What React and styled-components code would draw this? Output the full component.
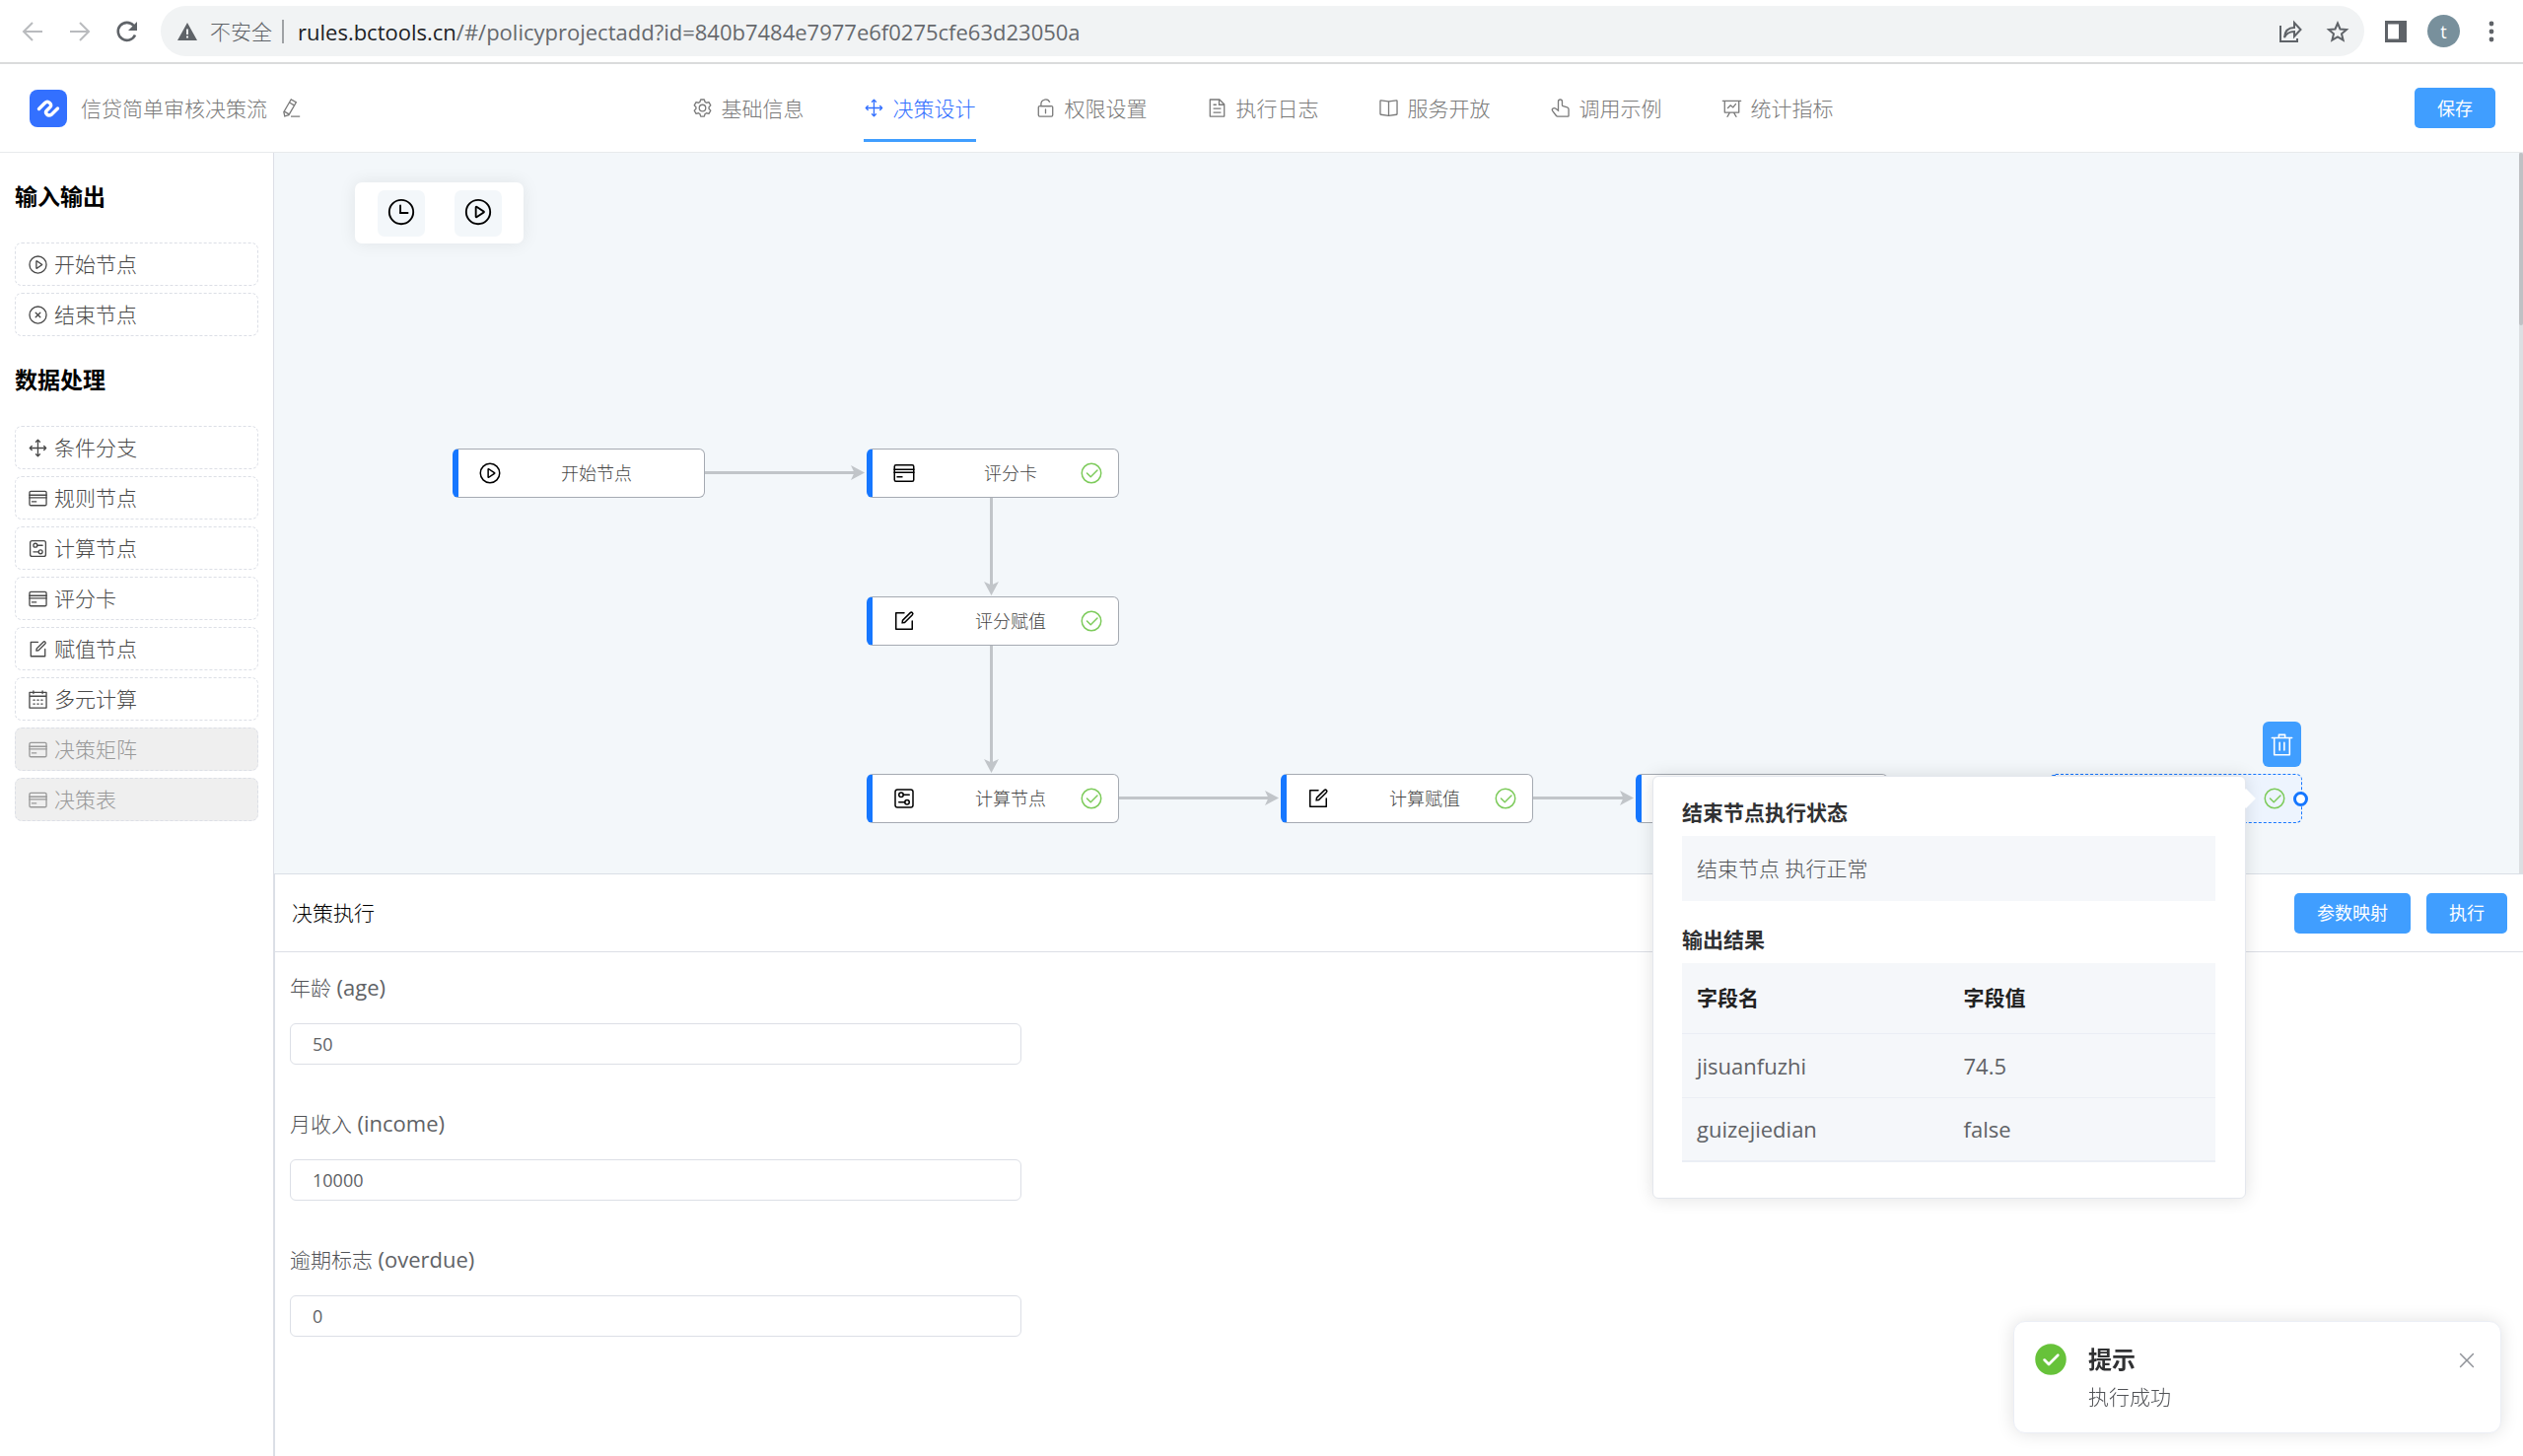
import React from "react";
import styled, { createGlobalStyle } from "styled-components";

const GlobalStyle = createGlobalStyle`
  *, *::before, *::after { box-sizing: border-box; }
  body {
    margin: 0;
    background: #fff;
    color: #505256;
    font-family: "Open Sans", "Noto Sans CJK SC", sans-serif;
    font-size: 21px;
    line-height: 32px;
    font-weight: 300;
  }
  button, input { font: inherit; color: inherit; }
  button { cursor: pointer; }
  h1, h2, h3, p, ul { margin: 0; padding: 0; }
`;

/* ---------- icons ---------- */

const RING =
  "M512 896a384 384 0 1 0 0-768 384 384 0 0 0 0 768zm0 64a448 448 0 1 1 0-896 448 448 0 0 1 0 896z";

const ICONS = {
  play: [
    RING,
    "M464 648.384 668.608 512 464 375.616v272.768zm10.624-342.656 249.472 166.336a48 48 0 0 1 0 79.872L474.624 718.272A48 48 0 0 1 400 678.336V345.6a48 48 0 0 1 74.624-39.936z",
  ],
  close: [
    RING,
    "m466.752 512-90.496-90.496a32 32 0 0 1 45.248-45.248L512 466.752l90.496-90.496a32 32 0 0 1 45.248 45.248L557.248 512l90.496 90.496a32 32 0 1 1-45.248 45.248L512 557.248l-90.496 90.496a32 32 0 0 1-45.248-45.248L466.752 512z",
  ],
  clock: [
    RING,
    "M480 256a32 32 0 0 1 32 32v256a32 32 0 0 1-64 0V288a32 32 0 0 1 32-32z",
    "M480 512h256q32 0 32 32t-32 32H480q-32 0-32-32t32-32z",
  ],
  check: [
    RING,
    "M745.344 361.344a32 32 0 0 1 45.312 45.312l-288 288a32 32 0 0 1-45.312 0l-160-160a32 32 0 1 1 45.312-45.312L480 626.752l265.344-265.408z",
  ],
  rank: [
    "m186.496 544 41.408 41.344a32 32 0 1 1-45.248 45.312l-96-96a32 32 0 0 1 0-45.312l96-96a32 32 0 1 1 45.248 45.312L186.496 480h290.816V186.432l-41.472 41.472a32 32 0 1 1-45.248-45.184l96-96.128a32 32 0 0 1 45.312 0l96 96.064a32 32 0 0 1-45.248 45.184l-41.344-41.28V480H832l-41.344-41.344a32 32 0 0 1 45.248-45.312l96 96a32 32 0 0 1 0 45.312l-96 96a32 32 0 0 1-45.248-45.312L832 544H541.312v293.44l41.344-41.28a32 32 0 1 1 45.248 45.248l-96 96a32 32 0 0 1-45.312 0l-96-96a32 32 0 1 1 45.312-45.248l41.408 41.408V544H186.496z",
  ],
  trash: [
    "M160 256H96a32 32 0 0 1 0-64h256V95.936a32 32 0 0 1 32-32h256a32 32 0 0 1 32 32V192h256a32 32 0 1 1 0 64h-64v672a32 32 0 0 1-32 32H192a32 32 0 0 1-32-32V256zm448-64v-64H416v64h192zM224 896h576V256H224v640zm192-128a32 32 0 0 1-32-32V416a32 32 0 0 1 64 0v320a32 32 0 0 1-32 32zm192 0a32 32 0 0 1-32-32V416a32 32 0 0 1 64 0v320a32 32 0 0 1-32 32z",
  ],
  edit: [
    "M832 512a32 32 0 1 1 64 0v352a32 32 0 0 1-32 32H160a32 32 0 0 1-32-32V160a32 32 0 0 1 32-32h352a32 32 0 0 1 0 64H192v640h640V512z",
    "m469.952 554.24 52.8-7.552L847.104 222.4a32 32 0 1 0-45.248-45.248L477.44 501.44l-7.552 52.8zm422.4-422.4a96 96 0 0 1 0 135.808l-331.84 331.84a32 32 0 0 1-18.112 9.088L436.8 623.68a32 32 0 0 1-36.224-36.224l15.104-105.6a32 32 0 0 1 9.024-18.112l331.904-331.84a96 96 0 0 1 135.744 0z",
  ],
  pen: [
    "m199.04 672.64 193.984 112 224-387.968-193.92-112-224 388.032zm-23.872 60.16 32.896 148.288 144.896-45.696L175.168 732.8zM455.04 229.248l193.92 112 56.704-98.112-193.984-112-56.64 98.112zM104.32 708.8l384-665.024 304.768 175.936L409.152 884.8h.064l-248.448 78.336L104.32 708.8zm384 254.272v-64h448v64h-448z",
  ],
  cross: [
    "M764.288 214.592 512 466.88 259.712 214.592a31.936 31.936 0 0 0-45.12 45.12L466.752 512 214.528 764.224a31.936 31.936 0 1 0 45.12 45.184L512 557.184l252.288 252.288a31.936 31.936 0 0 0 45.12-45.12L557.12 512.064l252.288-252.352a31.936 31.936 0 1 0-45.12-45.184z",
  ],
  success: [
    "M512 64a448 448 0 1 1 0 896 448 448 0 0 1 0-896zm-55.808 536.384-99.52-99.584a38.4 38.4 0 1 0-54.336 54.336l126.72 126.72a38.272 38.272 0 0 0 54.336 0l262.4-262.464a38.4 38.4 0 1 0-54.272-54.336L456.192 600.384z",
  ],
  unlock: [
    "M224 448a32 32 0 0 0-32 32v384a32 32 0 0 0 32 32h576a32 32 0 0 0 32-32V480a32 32 0 0 0-32-32H224zm0-64h576a96 96 0 0 1 96 96v384a96 96 0 0 1-96 96H224a96 96 0 0 1-96-96V480a96 96 0 0 1 96-96z",
    "M512 544a32 32 0 0 1 32 32v192a32 32 0 1 1-64 0V576a32 32 0 0 1 32-32zm178.304-295.296A192.064 192.064 0 0 0 320 320v64h352l96 38.4V448H256V320a256 256 0 0 1 493.76-95.104l-59.456 23.808z",
  ],
  document: [
    "M832 384H576V128H192v768h640V384zm-26.496-64L640 154.496V320h165.504zM160 64h480l256 256v608a32 32 0 0 1-32 32H160a32 32 0 0 1-32-32V96a32 32 0 0 1 32-32zm160 448h384v64H320v-64zm0-192h160v64H320v-64zm0 384h384v64H320v-64z",
  ],
  reading: [
    "m512 863.36 384-54.848v-638.72L525.568 222.72a96 96 0 0 1-27.136 0L128 169.792v638.72l384 54.848zM137.024 106.432l370.432 52.928a32 32 0 0 0 9.088 0l370.432-52.928A64 64 0 0 1 960 169.792v638.72a64 64 0 0 1-54.976 63.36l-388.48 55.488a32 32 0 0 1-9.088 0l-388.48-55.488A64 64 0 0 1 64 808.512v-638.72a64 64 0 0 1 73.024-63.36z",
    "M480 192h64v704h-64z",
  ],
  pointer: [
    "M511.552 128c-35.584 0-64.384 28.8-64.384 64.448v516.48L274.048 570.88a94.272 94.272 0 0 0-112.896-3.456 44.416 44.416 0 0 0-8.96 62.208L332.8 870.4A64 64 0 0 0 384 896h512V575.232a64 64 0 0 0-45.632-61.312l-205.952-61.76A96 96 0 0 1 576 360.192V192.448C576 156.8 547.2 128 511.552 128zM359.04 556.8l24.128 19.2V192.448a128.448 128.448 0 1 1 256.832 0v167.744a32 32 0 0 0 22.784 30.656l206.016 61.76A128 128 0 0 1 960 575.232V896a64 64 0 0 1-64 64H384a128 128 0 0 1-102.4-51.2L101.056 668.032A108.416 108.416 0 0 1 128 512.512a158.272 158.272 0 0 1 185.984 8.32z",
  ],
  dataLine: [
    "M359.168 768H160a32 32 0 0 1-32-32V192H64a32 32 0 0 1 0-64h896a32 32 0 1 1 0 64h-64v544a32 32 0 0 1-32 32H665.216l110.848 192h-73.856L591.36 768H433.024L322.176 960H248.32l110.848-192zM832 192H192v512h640V192z",
    "M342.656 534.656a32 32 0 1 1-45.312-45.312L444.992 341.76l125.44 94.08L679.04 300.032a32 32 0 1 1 49.92 39.936L581.632 524.224 451.008 426.24 342.656 534.592z",
  ],
  setting: [
    "M600.704 64a32 32 0 0 1 30.464 22.208l35.2 109.376c14.784 7.232 28.928 15.36 42.432 24.512l112.384-24.192a32 32 0 0 1 34.432 15.36L944.32 364.8a32 32 0 0 1-4.032 37.504l-77.12 85.12a357.12 357.12 0 0 1 0 49.024l77.12 85.248a32 32 0 0 1 4.032 37.504l-88.704 153.6a32 32 0 0 1-34.432 15.296L708.8 803.904c-13.44 9.088-27.648 17.28-42.368 24.512l-35.264 109.376A32 32 0 0 1 600.704 960H423.296a32 32 0 0 1-30.464-22.208L357.696 828.48a351.616 351.616 0 0 1-42.56-24.64l-112.32 24.256a32 32 0 0 1-34.432-15.36L79.68 659.2a32 32 0 0 1 4.032-37.504l77.12-85.248a357.12 357.12 0 0 1 0-48.896l-77.12-85.248A32 32 0 0 1 79.68 364.8l88.704-153.6a32 32 0 0 1 34.432-15.296l112.32 24.256c13.568-9.152 27.776-17.408 42.56-24.64l35.2-109.312A32 32 0 0 1 423.232 64H600.64zm-23.424 64H446.72l-36.352 113.088-24.512 11.968a294.113 294.113 0 0 0-34.816 20.096l-22.656 15.36-116.224-25.088-65.28 113.152 79.68 88.192-1.92 27.136a293.12 293.12 0 0 0 0 40.192l1.92 27.136-79.808 88.192 65.344 113.152 116.224-25.024 22.656 15.296a294.113 294.113 0 0 0 34.816 20.096l24.512 11.968L446.72 896h130.688l36.48-113.152 24.448-11.904a288.282 288.282 0 0 0 34.752-20.096l22.592-15.296 116.288 25.024 65.28-113.152-79.744-88.192 1.92-27.136a293.12 293.12 0 0 0 0-40.256l-1.92-27.136 79.808-88.128-65.344-113.152-116.288 24.96-22.592-15.232a287.616 287.616 0 0 0-34.752-20.096l-24.448-11.904L577.344 128zM512 320a192 192 0 1 1 0 384 192 192 0 0 1 0-384zm0 64a128 128 0 1 0 0 256 128 128 0 0 0 0-256z",
  ],
  card: [
    "M160 192a32 32 0 0 0-32 32v576a32 32 0 0 0 32 32h704a32 32 0 0 0 32-32V224a32 32 0 0 0-32-32H160zm0-64h704a96 96 0 0 1 96 96v576a96 96 0 0 1-96 96H160a96 96 0 0 1-96-96V224a96 96 0 0 1 96-96z",
    "M64 320h896v64H64v-64zm0 128h896v64H64v-64zm128 192h256v64H192z",
  ],
  setup: [
    "M224 160a64 64 0 0 0-64 64v576a64 64 0 0 0 64 64h576a64 64 0 0 0 64-64V224a64 64 0 0 0-64-64H224zm0-64h576a128 128 0 0 1 128 128v576a128 128 0 0 1-128 128H224A128 128 0 0 1 96 800V224A128 128 0 0 1 224 96z",
    "M384 416a64 64 0 1 0 0-128 64 64 0 0 0 0 128zm0 64a128 128 0 1 1 0-256 128 128 0 0 1 0 256z",
    "M480 320h256q32 0 32 32t-32 32H480q-32 0-32-32t32-32zm160 416a64 64 0 1 0 0-128 64 64 0 0 0 0 128zm0 64a128 128 0 1 1 0-256 128 128 0 0 1 0 256z",
    "M288 640h256q32 0 32 32t-32 32H288q-32 0-32-32t32-32z",
  ],
  calendar: [
    "M128 384v512h768V192H768v32a32 32 0 1 1-64 0v-32H320v32a32 32 0 0 1-64 0v-32H128v128h768v64H128zm192-256h384V96a32 32 0 1 1 64 0v32h160a32 32 0 0 1 32 32v768a32 32 0 0 1-32 32H96a32 32 0 0 1-32-32V160a32 32 0 0 1 32-32h160V96a32 32 0 0 1 64 0v32zm-32 384h64a32 32 0 0 1 0 64h-64a32 32 0 0 1 0-64zm0 192h64a32 32 0 1 1 0 64h-64a32 32 0 1 1 0-64zm192-192h64a32 32 0 0 1 0 64h-64a32 32 0 0 1 0-64zm0 192h64a32 32 0 1 1 0 64h-64a32 32 0 1 1 0-64zm192-192h64a32 32 0 1 1 0 64h-64a32 32 0 1 1 0-64zm0 192h64a32 32 0 1 1 0 64h-64a32 32 0 1 1 0-64z",
  ],
};

const IconSvg = styled.svg`
  display: block;
  flex: none;
  width: ${(p) => p.$size}px;
  height: ${(p) => p.$size}px;
  fill: currentColor;
`;

const Icon = ({ name, size = 21 }) => (
  <IconSvg viewBox="0 0 1024 1024" $size={size} aria-hidden="true">
    {ICONS[name].map((d) => (
      <path key={d} d={d} />
    ))}
  </IconSvg>
);

const LineSvg = styled.svg`
  display: block;
  flex: none;
  width: 24px;
  height: 24px;
  fill: none;
  stroke: currentColor;
  stroke-width: 2;
`;

/* ---------- shell ---------- */

const Page = styled.div`
  display: flex;
  flex-direction: column;
  height: 100vh;
  overflow: hidden;
`;

const BrowserBar = styled.div`
  flex: none;
  display: flex;
  align-items: center;
  gap: 20px;
  height: 65px;
  padding: 0 20px 0 21px;
  border-bottom: 2px solid #dadbdc;
  color: #5f6368;
`;

const HistoryButtons = styled.div`
  display: flex;
  gap: 24px;
  margin-right: 2px;
`;

const BarButton = styled.button`
  display: block;
  padding: 0;
  border: 0;
  background: none;
  color: ${(p) => (p.disabled ? "#b9bbbe" : "#5f6368")};
`;

const Omnibox = styled.div`
  flex: 1;
  display: flex;
  align-items: center;
  height: 51px;
  padding: 0 15px;
  border-radius: 26px;
  background: #f1f3f4;
`;

const Insecure = styled.span`
  display: flex;
  align-items: center;
  gap: 11px;
  padding-right: 10px;
`;

const Divider = styled.span`
  width: 2px;
  height: 24px;
  margin-right: 14px;
  background: #9fa2a5;
`;

const Address = styled.span`
  flex: 1;
  font-size: 22px;
  font-weight: 400;
  color: #66696d;

  b {
    font-weight: 400;
    color: #202124;
  }
`;

const OmniActions = styled.span`
  display: flex;
  gap: 24px;
`;

const Avatar = styled.button`
  width: 33px;
  height: 33px;
  padding: 0;
  border: 0;
  border-radius: 50%;
  background: #78909c;
  color: #fff;
  font-size: 18px;
  font-weight: 400;
  line-height: 32px;
`;

const AppHeader = styled.header`
  flex: none;
  display: grid;
  grid-template-columns: 1fr auto 1fr;
  align-items: center;
  height: 90px;
  padding: 0 28px 0 30px;
  border-bottom: 1px solid #e8eaec;
`;

const Brand = styled.div`
  display: flex;
  align-items: center;
  gap: 14px;
  color: #7a7a7a;
`;

const BrandName = styled.h1`
  font-size: 21px;
  font-weight: 300;
`;

const Logo = styled.svg`
  display: block;
  width: 38px;
  height: 38px;
`;

const Tabs = styled.nav`
  display: flex;
  gap: 60px;
  align-self: stretch;
`;

const Tab = styled.a`
  display: flex;
  align-items: center;
  gap: 9px;
  height: 79px;
  padding-top: 13px;
  border-bottom: 3px solid ${(p) => (p.$active ? "#409eff" : "transparent")};
  color: ${(p) => (p.$active ? "#3370ff" : "#7a7a7a")};
  text-decoration: none;
`;

const PrimaryButton = styled.button`
  height: 41px;
  padding: 0 23px;
  border: 0;
  border-radius: 5px;
  background: #409eff;
  color: #fff;
  font-size: 18px;
  font-weight: 400;
  justify-self: end;
`;

const Body = styled.div`
  flex: 1;
  min-height: 0;
  display: flex;
`;

/* ---------- sidebar ---------- */

const Sidebar = styled.aside`
  flex: none;
  width: 278px;
  padding: 28px 15px;
  border-right: 1px solid #dcdfe6;
`;

const GroupTitle = styled.h2`
  margin-bottom: 31px;
  font-size: 23px;
  line-height: 32px;
  font-weight: 700;
  color: #000;
`;

const Palette = styled.div`
  display: flex;
  flex-direction: column;
  gap: 7px;
  margin-bottom: 28px;
`;

const PaletteItem = styled.button`
  display: flex;
  align-items: center;
  gap: 6px;
  height: 44px;
  padding: 0 12px;
  border: 1px dashed #dcdfe6;
  border-radius: 7px;
  background: ${(p) => (p.disabled ? "#efefef" : "#fff")};
  color: ${(p) => (p.disabled ? "#999" : "#484848")};
  text-align: left;
`;

/* ---------- canvas ---------- */

const Main = styled.main`
  flex: 1;
  min-width: 0;
  display: flex;
  flex-direction: column;
`;

const Canvas = styled.section`
  position: relative;
  z-index: 1;
  flex: 1;
  background: #f3f7fa;
`;

const ScrollTrack = styled.div`
  position: absolute;
  top: 0;
  right: 0;
  bottom: 0;
  width: 4px;
  background: #dcdfe2;
`;

const ScrollThumb = styled.div`
  height: 175px;
  border-radius: 2px;
  background: #bfc1c4;
`;

const Toolbar = styled.div`
  position: absolute;
  left: 82px;
  top: 30px;
  display: flex;
  gap: 30px;
  padding: 8px 22px 7px 23px;
  border-radius: 7px;
  background: #fff;
  box-shadow: 0 0 18px rgba(0, 0, 0, 0.08);
`;

const ToolButton = styled.button`
  width: 48px;
  height: 47px;
  padding: 0 9px 3px;
  border: 0;
  border-radius: 7px;
  background: #f3f7fa;
  color: #000;
`;

const Edges = styled.svg`
  position: absolute;
  inset: 0;
  width: 100%;
  height: 100%;
  fill: #c1c5c9;
  stroke: none;
`;

const NodeBox = styled.div`
  position: absolute;
  left: ${(p) => p.$x}px;
  top: ${(p) => p.$y}px;
  display: flex;
  align-items: center;
  width: 256px;
  height: 50px;
  padding: 0 13px 0 20px;
  border: 1px ${(p) => (p.$selected ? "dashed #1677ff" : "solid #a5aab2")};
  border-left: 6px solid #1677ff;
  border-radius: 6px;
  background: ${(p) => (p.$selected ? "#edf4fe" : "#fff")};
  font-size: 18px;
  color: #444;
`;

const NodeIcon = styled.span`
  color: #000;
`;

const NodeLabel = styled.span`
  flex: 1;
  text-align: center;
`;

const NodeStatus = styled.span`
  position: absolute;
  right: 15px;
  top: 12px;
  color: #7dcb5b;
`;

const Anchor = styled.span`
  position: absolute;
  left: 2048px;
  top: 648px;
  width: 15px;
  height: 15px;
  border: 3px solid #1677ff;
  border-radius: 50%;
  background: #fff;
`;

const DeleteButton = styled.button`
  position: absolute;
  left: 2017px;
  top: 577px;
  width: 39px;
  height: 46px;
  padding: 0 7px;
  border: 0;
  border-radius: 6px;
  background: #409eff;
  color: #fff;
`;

/* ---------- result popover ---------- */

const Popover = styled.div`
  position: absolute;
  left: 1398px;
  top: 632px;
  width: 602px;
  padding: 20px 30px 36px 29px;
  border: 1px solid #e4e7ed;
  border-radius: 6px;
  background: #fff;
  box-shadow: 0 0 18px rgba(0, 0, 0, 0.12);

  &::after {
    content: "";
    position: absolute;
    right: -8px;
    top: 15px;
    width: 14px;
    height: 14px;
    background: #fff;
    transform: rotate(45deg);
  }
`;

const PopTitle = styled.h3`
  font-size: 21px;
  line-height: 32px;
  font-weight: 700;
  color: #303133;
`;

const StatusLine = styled.p`
  margin: 8px 0 23px;
  padding: 17px 15px;
  background: #f5f7fa;
`;

const ResultTable = styled.table`
  width: 100%;
  margin-top: 8px;
  border-collapse: collapse;
  table-layout: fixed;
  background: #f5f7fa;
  border-bottom: 2px solid #ebeef5;

  th, td {
    height: 65px;
    padding: 0 15px;
    border-bottom: 1px solid #ebeef5;
    text-align: left;
  }
  th {
    height: 71px;
    font-weight: 700;
    color: #222;
  }
  td {
    font-size: 22px;
    font-weight: 400;
    color: #606266;
  }
`;

/* ---------- run panel ---------- */

const Panel = styled.section`
  flex: 0 0 40vh;
  border-top: 1px solid #dadfe6;
  border-left: 1px solid #dadfe6;
`;

const PanelHeader = styled.div`
  display: flex;
  align-items: center;
  gap: 16px;
  height: 79px;
  padding: 0 16px 0 17px;
  border-bottom: 1px solid #dcdfe6;
`;

const PanelTitle = styled.h2`
  flex: 1;
  font-size: 21px;
  font-weight: 300;
  color: #000;
`;

const Form = styled.form`
  display: grid;
  grid-template-columns: repeat(3, 1fr);
  gap: 12px;
  padding: 20px 15px;
`;

const Fields = styled.div`
  display: flex;
  flex-direction: column;
  gap: 44px;
`;

const Field = styled.label`
  display: flex;
  flex-direction: column;
  gap: 20px;
`;

const Latin = styled.span`
  font-size: 22px;
  line-height: 24px;
  font-weight: 400;
  color: #606266;
`;

const TextInput = styled.input`
  height: 42px;
  padding: 0 22px;
  border: 1px solid #dcdfe6;
  border-radius: 6px;
  background: #fff;
  outline: 0;
  font-size: 18px;
  font-weight: 400;
  color: #606266;
`;

/* ---------- toast ---------- */

const Toast = styled.div`
  position: fixed;
  right: 22px;
  bottom: 23px;
  z-index: 2;
  display: flex;
  align-items: flex-start;
  width: 495px;
  padding: 20px 22px 20px 19px;
  border: 1px solid #ebeef5;
  border-radius: 12px;
  background: #fff;
  box-shadow: 0 0 18px rgba(0, 0, 0, 0.12);
`;

const ToastIcon = styled.span`
  color: #67c23a;
`;

const ToastBody = styled.div`
  flex: 1;
  padding-left: 20px;
`;

const ToastTitle = styled.h3`
  font-size: 24px;
  line-height: 36px;
  font-weight: 700;
  color: #303133;
`;

const ToastText = styled.p`
  padding: 4px 0 0;
`;

const ToastClose = styled.button`
  margin: 7px 0;
  padding: 0;
  border: 0;
  background: none;
  color: #909399;
`;

/* ---------- data ---------- */

const TABS = [
  ["setting", "基础信息"],
  ["rank", "决策设计"],
  ["unlock", "权限设置"],
  ["document", "执行日志"],
  ["reading", "服务开放"],
  ["pointer", "调用示例"],
  ["dataLine", "统计指标"],
];

const GROUPS = [
  {
    title: "输入输出",
    items: [
      ["play", "开始节点"],
      ["close", "结束节点"],
    ],
  },
  {
    title: "数据处理",
    items: [
      ["rank", "条件分支"],
      ["card", "规则节点"],
      ["setup", "计算节点"],
      ["card", "评分卡"],
      ["edit", "赋值节点"],
      ["calendar", "多元计算"],
      ["card", "决策矩阵", true],
      ["card", "决策表", true],
    ],
  },
];

const NODES = [
  { x: 181, y: 300, icon: "play", label: "开始节点" },
  { x: 601, y: 300, icon: "card", label: "评分卡", done: true },
  { x: 601, y: 450, icon: "edit", label: "评分赋值", done: true },
  { x: 601, y: 630, icon: "setup", label: "计算节点", done: true },
  { x: 1021, y: 630, icon: "edit", label: "计算赋值", done: true },
  { x: 1381, y: 630 },
  { x: 1801, y: 630, done: true, selected: true },
];

const EDGES = [
  { x: 437, y: 324.5, length: 162 },
  { x: 727.5, y: 350, length: 99, down: true },
  { x: 727.5, y: 500, length: 129, down: true },
  { x: 857, y: 654.5, length: 162 },
  { x: 1277, y: 654.5, length: 102 },
];

const FIELDS = [
  ["年龄", "(age)", "50"],
  ["月收入", "(income)", "10000"],
  ["逾期标志", "(overdue)", "0"],
];

const RESULTS = [
  ["jisuanfuzhi", "74.5"],
  ["guizejiedian", "false"],
];

/* ---------- parts ---------- */

function Browser() {
  return (
    <BrowserBar>
      <HistoryButtons>
        <BarButton disabled aria-label="后退">
          <LineSvg viewBox="0 0 24 24">
            <path d="M22 12H4M12 3l-9 9 9 9" />
          </LineSvg>
        </BarButton>
        <BarButton disabled aria-label="前进">
          <LineSvg viewBox="0 0 24 24">
            <path d="M2 12h18M12 3l9 9-9 9" />
          </LineSvg>
        </BarButton>
        <BarButton aria-label="刷新">
          <LineSvg viewBox="0 0 24 24">
            <path strokeWidth="2.6" d="M20 15.5A9 9 0 1 1 18.6 6L20 7.6" />
            <path fill="currentColor" stroke="none" d="M22 2v9h-9z" />
          </LineSvg>
        </BarButton>
      </HistoryButtons>
      <Omnibox>
        <Insecure>
          <LineSvg viewBox="0 0 24 24">
            <path
              fill="currentColor"
              stroke="none"
              fillRule="evenodd"
              d="M12 3 22 21H2zM11 9.500v5.500h2V9.500zM11 16.500v2h2v-2z"
            />
          </LineSvg>
          不安全
        </Insecure>
        <Divider />
        <Address>
          <b>rules.bctools.cn</b>/#/policyprojectadd?id=840b7484e7977e6f0275cfe63d23050a
        </Address>
        <OmniActions>
          <BarButton aria-label="分享">
            <LineSvg viewBox="0 0 24 24">
              <path d="M2 6v16h17v-3" />
              <path d="M6 18c.5-6.500 3.500-10 10-10V3l6.500 7-6.500 7v-5c-5 0-8 2-10 6z" />
            </LineSvg>
          </BarButton>
          <BarButton aria-label="收藏">
            <LineSvg viewBox="0 0 24 24">
              <path d="m12 3.500 2.500 6 6.500.5-5 4.300 1.600 6.400L12 17.300l-5.600 3.400L8 14.300 3 10l6.500-.5z" />
            </LineSvg>
          </BarButton>
        </OmniActions>
      </Omnibox>
      <BarButton aria-label="侧边栏">
        <LineSvg viewBox="0 0 24 24">
          <path fill="currentColor" stroke="none" fillRule="evenodd" d="M1 1h22v22H1zM4 4.500v15h11v-15z" />
        </LineSvg>
      </BarButton>
      <Avatar aria-label="用户">t</Avatar>
      <BarButton aria-label="更多">
        <LineSvg viewBox="0 0 24 24">
          <g fill="currentColor" stroke="none">
            <circle cx="12" cy="4" r="2.400" />
            <circle cx="12" cy="12" r="2.400" />
            <circle cx="12" cy="20" r="2.400" />
          </g>
        </LineSvg>
      </BarButton>
    </BrowserBar>
  );
}

function Header() {
  return (
    <AppHeader>
      <Brand>
        <Logo viewBox="0 0 38 38" aria-hidden="true">
          <rect width="38" height="38" rx="8" fill="#3370ff" />
          <path
            fill="none"
            stroke="#fff"
            strokeWidth="3.400"
            strokeLinecap="round"
            d="M9.500 19.500 15.500 13.500Q18 11 20.500 13.500T20.500 18L17.500 21Q15.500 23 17.500 25T22.500 25L28.500 19"
          />
        </Logo>
        <BrandName>信贷简单审核决策流</BrandName>
        <Icon name="pen" />
      </Brand>
      <Tabs>
        {TABS.map(([icon, label], i) => (
          <Tab key={label} href="#" $active={i === 1}>
            <Icon name={icon} />
            {label}
          </Tab>
        ))}
      </Tabs>
      <PrimaryButton>保存</PrimaryButton>
    </AppHeader>
  );
}

function ResultPopover() {
  return (
    <Popover>
      <PopTitle>结束节点执行状态</PopTitle>
      <StatusLine>结束节点 执行正常</StatusLine>
      <PopTitle>输出结果</PopTitle>
      <ResultTable>
        <thead>
          <tr>
            <th>字段名</th>
            <th>字段值</th>
          </tr>
        </thead>
        <tbody>
          {RESULTS.map(([name, value]) => (
            <tr key={name}>
              <td>{name}</td>
              <td>{value}</td>
            </tr>
          ))}
        </tbody>
      </ResultTable>
    </Popover>
  );
}

function FlowCanvas() {
  return (
    <Canvas>
      <Edges aria-hidden="true">
        {EDGES.map((e) => (
          <g
            key={`${e.x}-${e.y}`}
            transform={`translate(${e.x} ${e.y}) rotate(${e.down ? 90 : 0})`}
          >
            <path d={`M0-1.500H${e.length - 9}V1.500H0z`} />
            <path d={`M${e.length} 0l-14-7.500 3.500 7.500-3.500 7.500z`} />
          </g>
        ))}
      </Edges>
      {NODES.map((n) => (
        <NodeBox key={`${n.x}-${n.y}`} $x={n.x} $y={n.y} $selected={n.selected}>
          {n.icon && (
            <NodeIcon>
              <Icon name={n.icon} size={24} />
            </NodeIcon>
          )}
          {n.label && <NodeLabel>{n.label}</NodeLabel>}
          {n.done && (
            <NodeStatus>
              <Icon name="check" size={24} />
            </NodeStatus>
          )}
        </NodeBox>
      ))}
      <Anchor />
      <DeleteButton aria-label="删除节点">
        <Icon name="trash" size={25} />
      </DeleteButton>
      <Toolbar>
        <ToolButton aria-label="定时">
          <Icon name="clock" size={30} />
        </ToolButton>
        <ToolButton aria-label="运行">
          <Icon name="play" size={30} />
        </ToolButton>
      </Toolbar>
      <ScrollTrack>
        <ScrollThumb />
      </ScrollTrack>
      <ResultPopover />
    </Canvas>
  );
}

function RunPanel() {
  return (
    <Panel>
      <PanelHeader>
        <PanelTitle>决策执行</PanelTitle>
        <PrimaryButton>参数映射</PrimaryButton>
        <PrimaryButton>执行</PrimaryButton>
      </PanelHeader>
      <Form onSubmit={(e) => e.preventDefault()}>
        <Fields>
          {FIELDS.map(([label, key, value]) => (
            <Field key={key}>
              <span>
                {label} <Latin>{key}</Latin>
              </span>
              <TextInput type="text" defaultValue={value} />
            </Field>
          ))}
        </Fields>
      </Form>
    </Panel>
  );
}

export default function App() {
  return (
    <Page>
      <GlobalStyle />
      <Browser />
      <Header />
      <Body>
        <Sidebar>
          {GROUPS.map((g) => (
            <React.Fragment key={g.title}>
              <GroupTitle>{g.title}</GroupTitle>
              <Palette>
                {g.items.map(([icon, label, off]) => (
                  <PaletteItem key={label} disabled={off}>
                    <Icon name={icon} />
                    {label}
                  </PaletteItem>
                ))}
              </Palette>
            </React.Fragment>
          ))}
        </Sidebar>
        <Main>
          <FlowCanvas />
          <RunPanel />
        </Main>
      </Body>
      <Toast role="alert">
        <ToastIcon>
          <Icon name="success" size={36} />
        </ToastIcon>
        <ToastBody>
          <ToastTitle>提示</ToastTitle>
          <ToastText>执行成功</ToastText>
        </ToastBody>
        <ToastClose aria-label="关闭">
          <Icon name="cross" size={24} />
        </ToastClose>
      </Toast>
    </Page>
  );
}
